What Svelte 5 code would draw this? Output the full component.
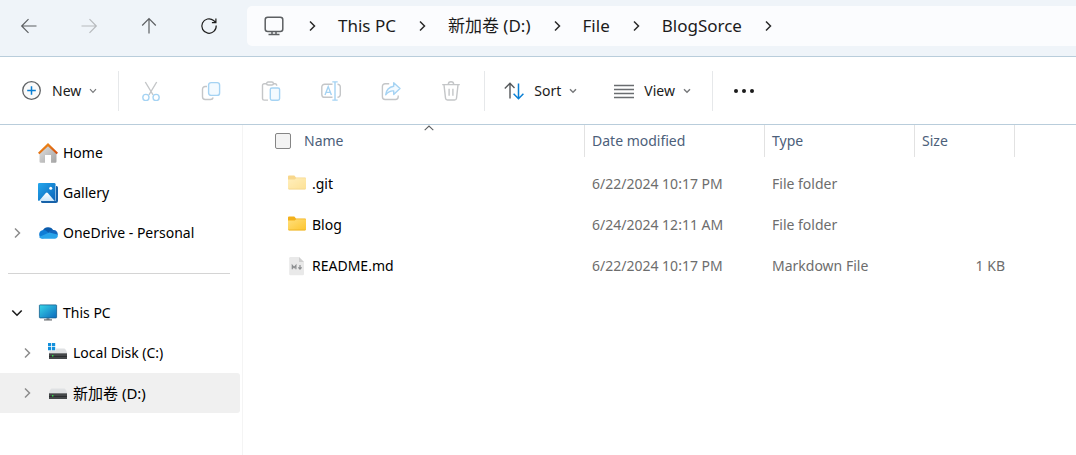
<script>
  const crumbs = ['This PC', '新加卷 (D:)', 'File', 'BlogSorce'];
  const files = [
    { name: '.git', icon: 'hidden-folder', modified: '6/22/2024 10:17 PM', type: 'File folder', size: '' },
    { name: 'Blog', icon: 'folder', modified: '6/24/2024 12:11 AM', type: 'File folder', size: '' },
    { name: 'README.md', icon: 'markdown', modified: '6/22/2024 10:17 PM', type: 'Markdown File', size: '1 KB' }
  ];
  let allSelected = $state(false);
</script>

{#snippet chevronRight()}
  <svg class="chev" width="8" height="12" viewBox="0 0 8 12" aria-hidden="true"><path d="M2 1.5 6.5 6 2 10.5" /></svg>
{/snippet}

{#snippet chevronDown()}
  <svg class="drop" width="8" height="6" viewBox="0 0 8 6" aria-hidden="true"><path d="M1 1.2 4 4.3 7 1.2" /></svg>
{/snippet}

{#snippet drive()}
  <path fill="#dfe1e3" d="M4 5.5h12q2 0 3 4.5H1q1-4.500 3-4.500z" />
  <path fill="#444749" d="M1 10h18v6H1z" />
  <path fill="#77797b" d="M1 10h18v1H1z" />
  <path fill="#2b2d2f" d="M1 13h18v1H1z" />
  <path fill="#35e04a" d="M4 12h1.4v1.4H4z" />
{/snippet}

<div class="window">
  <header>
    <nav class="history" aria-label="History">
      <button aria-label="Back"><svg width="20" height="20" viewBox="0 0 20 20"><path d="M17.5 10H3M9.500 3.200 2.700 10l6.800 6.800" /></svg></button>
      <button aria-label="Forward" disabled><svg width="20" height="20" viewBox="0 0 20 20"><path d="M2.500 10H17M10.500 3.200l6.800 6.800-6.800 6.800" /></svg></button>
      <button aria-label="Up"><svg width="20" height="20" viewBox="0 0 20 20"><path d="M10 17.500V3M3.200 9.500 10 2.700l6.800 6.800" /></svg></button>
      <button aria-label="Refresh"><svg class="dark" width="20" height="20" viewBox="0 0 20 20"><path d="M17.200 9.500A7.200 7.200 0 1 1 14.600 4.500L16.800 6.500M16.900 2.600v4h-4" /></svg></button>
    </nav>
    <nav class="address" aria-label="Address">
      <svg class="monitor" width="20" height="20" viewBox="0 0 20 20" aria-hidden="true">
        <rect x="1.200" y="1.200" width="17.600" height="14.300" rx="2.500" />
        <path d="M8 15.500v3M12 15.500v3M4.500 18.600h11" />
      </svg>
      {@render chevronRight()}
      {#each crumbs as crumb}
        <a href="#top">{crumb}</a>
        {@render chevronRight()}
      {/each}
    </nav>
  </header>

  <div class="toolbar" role="toolbar" aria-label="Commands">
    <button class="command new">
      <svg width="20" height="20" viewBox="0 0 20 20"><circle cx="9.500" cy="9.500" r="8.800" fill="#fafafa" stroke="#5f6265" stroke-width="1.300" /><path stroke="#0a7fd4" stroke-width="1.500" d="M9.500 5.200v8.600M5.200 9.500h8.600" /></svg>
      <span>New</span>
      {@render chevronDown()}
    </button>
    <div class="group">
      <button aria-label="Cut" disabled><svg width="20" height="20" viewBox="0 0 20 20">
        <path stroke="#c4c6c8" d="M4.300 1l7.800 13M15.700 1 7.900 14" />
        <g stroke="#a5d3f3"><circle cx="4.900" cy="16.500" r="3.100" /><circle cx="15.100" cy="16.500" r="3.100" /></g></svg></button>
      <button aria-label="Copy" disabled><svg width="20" height="20" viewBox="0 0 20 20">
        <path stroke="#c4c6c8" d="M6 5.500H4.200A2.700 2.700 0 0 0 1.500 8.200v7.600a2.700 2.700 0 0 0 2.700 2.700h5.300q2.200 0 2.700-2" />
        <rect stroke="#a5d3f3" fill="#f3faff" x="7.600" y="1.600" width="11" height="12.800" rx="2.500" /></svg></button>
      <button aria-label="Paste" disabled><svg width="20" height="20" viewBox="0 0 20 20">
        <path stroke="#c4c6c8" d="M6 2.700H3.200a1.700 1.700 0 0 0-1.700 1.700v13a1.700 1.700 0 0 0 1.700 1.700h3.800M12 2.700h2q1.700 0 1.700 2" />
        <rect stroke="#c4c6c8" x="5.600" y="1" width="6.800" height="3" rx="1.500" />
        <rect stroke="#a5d3f3" fill="#f3faff" x="9.300" y="7" width="9.300" height="12.200" rx="1.600" /></svg></button>
      <button aria-label="Rename" disabled><svg width="20" height="20" viewBox="0 0 20 20">
        <path stroke="#c4c6c8" d="M11.500 3.200H3.700A2.900 2.900 0 0 0 .8 6.100v7.300a2.900 2.900 0 0 0 2.900 2.900h7.800M16.500 3.200a2.800 2.800 0 0 1 2.800 2.900v7.300a2.800 2.800 0 0 1-2.800 2.900" />
        <path stroke="#a5d3f3" d="M4 14 7.200 5.600 10.400 14M5 11.400h4.400M14 .9v18.200M11.300.9h5.400M11.300 19.100h5.400" /></svg></button>
      <button aria-label="Share" disabled><svg width="20" height="20" viewBox="0 0 20 20">
        <path stroke="#c4c6c8" d="M8.200 2.700H4.100a2.700 2.700 0 0 0-2.700 2.700v10.400a2.700 2.700 0 0 0 2.700 2.700h10.400a2.700 2.700 0 0 0 2.700-2.700v-1.400" />
        <path stroke="#a5d3f3" fill="#f3faff" stroke-linejoin="round" d="M12.700 1.800 19 7.600l-6.300 5.800v-3.500Q8.300 9.500 4.700 13.800 5.500 6.300 12.700 5.200z" /></svg></button>
      <button aria-label="Delete" disabled><svg width="20" height="20" viewBox="0 0 20 20">
        <path stroke="#c4c6c8" d="M1.200 3.600h17.600M7.300 3.400a2.700 2.700 0 0 1 5.400 0M3 3.800l1.500 13.400a2 2 0 0 0 2 1.800h7a2 2 0 0 0 2-1.800L17 3.800M8.100 7.700v7M11.900 7.700v7" /></svg></button>
    </div>
    <div class="group options">
      <button class="command">
        <svg width="20" height="20" viewBox="0 0 20 20"><path stroke="#55585b" stroke-width="1.400" d="M6 17.500V2.500M.8 7.500 6 2.300l4.500 4.600" /><path stroke="#0a7fd4" stroke-width="1.500" d="M14.500 2.500v15M9.600 12.800l4.900 4.900 4.900-4.900" /></svg>
        <span>Sort</span>
        {@render chevronDown()}
      </button>
      <button class="command">
        <svg width="20" height="20" viewBox="0 0 20 20"><path stroke="#6a6d70" d="M0 4.500h20M0 8.500h20M0 12.500h20M0 16.500h20" /></svg>
        <span>View</span>
        {@render chevronDown()}
      </button>
    </div>
    <button class="more" aria-label="See more"><svg width="22" height="6" viewBox="0 0 22 6"><g fill="#1b1b1b"><circle cx="3" cy="3" r="2" /><circle cx="11" cy="3" r="2" /><circle cx="19" cy="3" r="2" /></g></svg></button>
  </div>

  <div class="body">
    <nav class="sidebar" aria-label="Folders">
      <a class="item" href="#home">
        <span class="expand"></span>
        <svg width="20" height="20" viewBox="0 0 20 20" aria-hidden="true">
          <defs>
            <linearGradient id="wall" x2="1" y2="1"><stop stop-color="#e2e2e2" /><stop offset="1" stop-color="#a3a3a3" /></linearGradient>
            <linearGradient id="roof" x2="1" y2="1"><stop stop-color="#f79a18" /><stop offset="1" stop-color="#cf4a12" /></linearGradient>
          </defs>
          <path fill="url(#wall)" d="M10 2 18.500 10v8.500a1.300 1.300 0 0 1-1.300 1.300H13V12H7v7.800H2.800a1.300 1.300 0 0 1-1.300-1.300V10z" />
          <path fill="url(#roof)" d="M10 0 20 9.700 18.600 11.200 10 3.200 1.400 11.200 0 9.700z" />
        </svg>
        Home
      </a>
      <a class="item" href="#gallery">
        <span class="expand"></span>
        <svg width="20" height="20" viewBox="0 0 20 20" aria-hidden="true">
          <defs>
            <linearGradient id="photo" x2="1" y2="1"><stop stop-color="#24a7ed" /><stop offset="1" stop-color="#0a63b8" /></linearGradient>
            <linearGradient id="peak" x2="0" y2="1"><stop stop-color="#fff" /><stop offset="1" stop-color="#c9e6fa" /></linearGradient>
          </defs>
          <path fill="#1762a9" d="M3 18h13.500a1.500 1.500 0 0 0 1.500-1.500V3h.5A1.500 1.500 0 0 1 20 4.500V18a2 2 0 0 1-2 2H4.500A1.500 1.500 0 0 1 3 18.500z" />
          <rect width="17.500" height="18" rx="1.300" fill="url(#photo)" />
          <path fill="url(#peak)" d="m1 18 6.800-8q1-1 2 0l6.800 8z" />
          <circle cx="12.700" cy="5.200" r="1.500" fill="#fff" />
        </svg>
        Gallery
      </a>
      <a class="item" href="#onedrive">
        <span class="expand">{@render chevronRight()}</span>
        <svg width="20" height="20" viewBox="0 0 20 20" aria-hidden="true">
          <path fill="#0b5cad" d="M4.500 8A6 6 0 0 1 15.500 7.500L12 13z" />
          <path fill="#0f7dd6" d="M4.600 15.600A4.300 4.300 0 0 1 4.500 7.200Q7 6.800 9 8.500l5 4z" />
          <path fill="#1366bd" d="M10 9.500q2-3 5.500-2.400A4.200 4.200 0 0 1 19.700 12L16 13z" />
          <path fill="#29a3ea" d="M4.600 15.700Q2 15.500 1 14L11.300 9.600 19.500 11.400A3 3 0 0 1 17 15.700z" />
        </svg>
        OneDrive - Personal
      </a>
      <hr />
      <a class="item" href="#pc">
        <span class="expand open"><svg width="12" height="8" viewBox="0 0 12 8" aria-hidden="true"><path d="M1.300 1.500 6 6.200 10.700 1.500" /></svg></span>
        <svg width="20" height="20" viewBox="0 0 20 20" aria-hidden="true">
          <defs><linearGradient id="screen" x2="1" y2="1"><stop stop-color="#38d7e8" /><stop offset="1" stop-color="#0b69bd" /></linearGradient></defs>
          <path fill="#94999d" d="M8.500 14h3v3h-3z" /><path fill="#64696d" d="M6 16.300h8v1.200H6z" />
          <rect x="1.400" y="1.900" width="17.200" height="13" rx=".6" fill="url(#screen)" stroke="#155f8d" stroke-width=".8" />
        </svg>
        This PC
      </a>
      <a class="item nested" href="#c">
        <span class="expand">{@render chevronRight()}</span>
        <svg width="20" height="20" viewBox="0 0 20 20" aria-hidden="true">
          {@render drive()}
          <path fill="#fff" d="M0 0h8v7.500H0z" />
          <path fill="#1290dc" d="M0 0h3.200v3.200H0zM4 0h3.200v3.200H4zM0 4h3.200v3.200H0zM4 4h3.200v3.200H4z" />
        </svg>
        Local Disk (C:)
      </a>
      <a class="item nested current" href="#d" aria-current="page">
        <span class="expand">{@render chevronRight()}</span>
        <svg width="20" height="20" viewBox="0 0 20 20" aria-hidden="true">{@render drive()}</svg>
        <span lang="zh">新加卷 (D:)</span>
      </a>
    </nav>

    <main>
      <table>
        <colgroup><col class="c-name" /><col class="c-date" /><col class="c-type" /><col class="c-size" /></colgroup>
        <thead>
          <tr>
            <th aria-sort="ascending">
              <div class="name-head">
                <input type="checkbox" aria-label="Select all" bind:checked={allSelected} />
                <span>Name</span>
                <svg class="sorted" width="10" height="6" viewBox="0 0 10 6" aria-hidden="true"><path d="M.7 5.200 5 1 9.300 5.200" /></svg>
              </div>
            </th>
            <th>Date modified</th>
            <th>Type</th>
            <th>Size</th>
          </tr>
        </thead>
        <tbody>
          {#each files as file}
            <tr>
              <td>
                <div class="file">
                  {#if file.icon === 'markdown'}
                    <svg width="18" height="20" viewBox="0 0 18 20" aria-hidden="true">
                      <path fill="#e9e9e9" d="M2.500 1H11l5 5v12a1.300 1.300 0 0 1-1.300 1.300H2.500A1.300 1.300 0 0 1 1.200 18V2.300A1.300 1.300 0 0 1 2.500 1z" />
                      <path fill="#cfcfcf" d="m11 1 5 5h-5z" />
                      <path stroke="#8b8d8f" stroke-width="1.200" d="M4.300 13.200V9.500l1.800 2.200 1.800-2.200v3.700M12 9v3.800M10.400 11.300l1.600 1.800 1.600-1.800" />
                    </svg>
                  {:else}
                    <svg class:faded={file.icon === 'hidden-folder'} width="18" height="20" viewBox="0 0 18 20" aria-hidden="true">
                      <defs><linearGradient id="fold-{file.icon}" x2="1" y2="1"><stop stop-color="#ffdf7c" /><stop offset="1" stop-color="#fdc52e" /></linearGradient></defs>
                      <path fill="#f3b11b" d="M0 2.500A1 1 0 0 1 1 1.500h5.300L8 3.500h9a1 1 0 0 1 1 1V9H0z" />
                      <path fill="url(#fold-{file.icon})" d="M0 5.500h6.700l1.600-1.300H18v10.300a.8.8 0 0 1-.8.8H.8a.8.8 0 0 1-.8-.8z" />
                      <path fill="#eeb52b" d="M.3 14.600h17.400l-.5.8H.8z" />
                    </svg>
                  {/if}
                  <span>{file.name}</span>
                </div>
              </td>
              <td>{file.modified}</td>
              <td>{file.type}</td>
              <td class="size">{file.size}</td>
            </tr>
          {/each}
        </tbody>
      </table>
    </main>
  </div>
</div>

<style>
  :global(body) { margin: 0; background: #fff; }
  .window {
    display: flex;
    flex-direction: column;
    min-height: 100vh;
    font: 14px/20px "Noto Sans", "Noto Sans CJK SC", sans-serif;
    color: #1b1b1b;
  }
  svg { display: block; flex: none; fill: none; }
  a { color: inherit; text-decoration: none; }
  button {
    display: flex;
    align-items: center;
    padding: 0;
    border: 0;
    background: none;
    font: inherit;
    color: inherit;
  }
  header {
    display: flex;
    align-items: center;
    height: 56px;
    background: #eff4f9;
    border-bottom: 1px solid #b9cddb;
  }
  .history { display: flex; gap: 40px; padding: 0 28px 4px 19px; }
  .history svg { stroke: #5c5f62; stroke-width: 1.2; }
  .history :disabled svg { stroke: #b7babd; }
  .history .dark { stroke: #1f1f1f; }
  .address {
    display: flex;
    flex: 1;
    align-items: center;
    gap: 22px;
    height: 40px;
    margin-bottom: 4px;
    padding-left: 17px;
    border-radius: 5px 0 0 5px;
    background: #fbfcfe;
    font-size: 17px;
    white-space: nowrap;
  }
  .monitor { margin-right: 2px; stroke: #5c5f62; stroke-width: 1.5; }
  .chev { stroke: #2a2a2a; stroke-width: 1.5; }
  .drop { stroke: #77797b; stroke-width: 1.2; }
  .toolbar {
    display: flex;
    align-items: center;
    height: 67px;
    border-bottom: 1px solid #b9cddb;
  }
  .command { gap: 8px; }
  .command span { padding-left: 2px; }
  .new, .group, .more { height: 40px; }
  .new { padding: 0 21px 0 22px; }
  .group {
    display: flex;
    gap: 40px;
    padding: 0 23px 0 22px;
    border-left: 1px solid #e6e8ea;
  }
  .group svg { stroke-width: 1.4; }
  .options { gap: 37px; padding: 0 21px 0 19px; border-right: 1px solid #e6e8ea; }
  .more { padding-left: 20px; }
  .body { display: flex; flex: 1; }
  .sidebar {
    width: 243px;
    padding-top: 8px;
    box-sizing: border-box;
    border-right: 1px solid #f4f4f4;
    flex: none;
    color: #000;
  }
  .item {
    display: flex;
    align-items: center;
    gap: 5px;
    height: 40px;
    margin-right: 2px;
    padding-left: 8px;
  }
  .nested { padding-left: 18px; }
  .current { background: #f0f0f0; border-radius: 0 3px 3px 0; }
  .current [lang] { font-size: 15px; }
  .expand { display: flex; justify-content: center; width: 18px; margin-right: 7px; }
  .expand .chev { stroke: #8c8c8c; }
  .open svg { stroke: #1b1b1b; stroke-width: 1.6; }
  hr { margin: 20px 12px 19px 8px; border: 0; border-top: 1px solid #d4d4d4; }
  main { flex: 1; padding-left: 31px; }
  table { width: 741px; border-collapse: separate; border-spacing: 0; table-layout: fixed; }
  .c-name { width: 311px; }
  .c-date { width: 180px; }
  .c-type { width: 150px; }
  .c-size { width: 100px; }
  th, td { box-sizing: border-box; padding: 0 8px 0 7px; text-align: left; }
  th {
    height: 32px;
    border-right: 1px solid #e2e2e2;
    font-weight: 400;
    color: #4c607a;
  }
  th:first-child { padding: 0; }
  .name-head { position: relative; display: flex; align-items: center; gap: 13px; height: 32px; }
  .name-head input {
    appearance: none;
    width: 16px;
    height: 16px;
    margin: 0 0 0 1px;
    border: 1px solid #858585;
    border-radius: 2px;
    background: #f3f3f3;
  }
  .name-head input:checked { background: #0a7fd4; }
  .sorted { position: absolute; top: 0; left: 50%; margin-left: -5px; stroke: #5c5f62; stroke-width: 1.1; }
  tbody::before { content: ""; display: block; height: 6px; }
  td { height: 41px; color: #6d6d6d; }
  td:first-child { padding-left: 14px; }
  .file { display: flex; align-items: center; gap: 6px; color: #000; }
  .faded { opacity: 0.5; }
  td.size { padding-right: 10px; text-align: right; }
</style>
